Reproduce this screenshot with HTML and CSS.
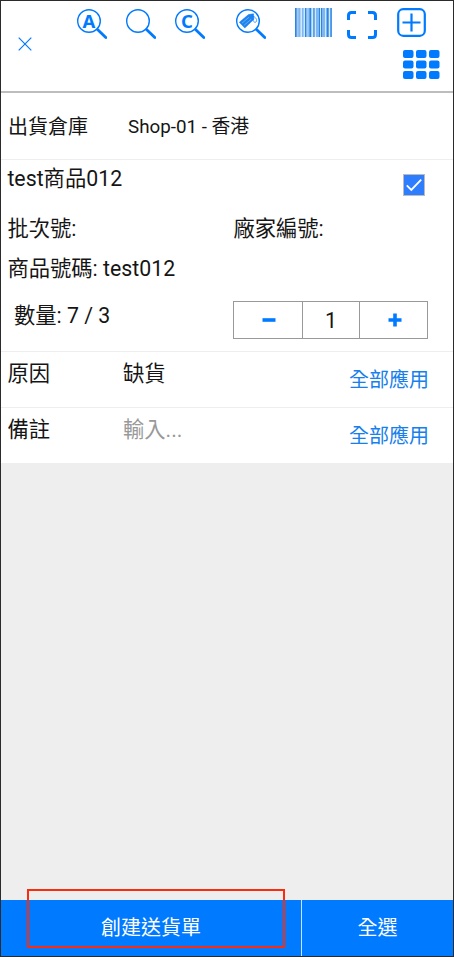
FILE: index.html
```html
<!DOCTYPE html>
<html lang="zh-Hant">
<head>
<meta charset="utf-8">
<title>出貨</title>
<link rel="stylesheet" href="styles.css">
</head>
<body>
<header class="header">
  <svg class="close" viewBox="0 0 14 14"><path d="M.7.7l12.6 12.6M13.3.7L.7 13.3"/></svg>
  <div class="tools">
    <div class="tool-row">
      <svg class="lens" viewBox="0 0 30 30"><circle cx="12" cy="12" r="11.3"/><path class="handle" d="M20.500 20.500l8.300 8"/><text x="12" y="18.700">A</text></svg>
      <svg class="lens" viewBox="0 0 30 30"><circle cx="12" cy="12" r="11.3"/><path class="handle" d="M20.500 20.500l8.300 8"/></svg>
      <svg class="lens" viewBox="0 0 30 30"><circle cx="12" cy="12" r="11.3"/><path class="handle" d="M20.500 20.500l8.300 8"/><text x="12" y="18.700">C</text></svg>
      <svg class="lens lens-tag" viewBox="0 0 30 30"><circle cx="12" cy="12" r="11.3"/><path class="handle" d="M20.500 20.500l8.300 8"/><path class="tag" d="M3.300 13.300L12.500 5.600l5-.8.400 5.500L8.800 19z"/><path class="tag-lines" d="M6 14.200l7-6M8.200 16.200l7-6"/><path class="string" d="M16.500 7.500c3.500 0 5 4 3.500 5.500-1.500 1-3-.5-3-3"/></svg>
      <svg class="barcode" viewBox="0 0 37 29"><path class="gaps" d="M0 0h37v29H0z"/><path d="M0 0h1.700v29H0zM2.700 0h.7v29h-.7zM4.500 0h.7v29h-.7zM7.500 0h.8v29h-.8zM10 0h1.500v29H10zM12.700 0h.7v29h-.7zM14.300 0h2v29h-2zM18.300 0h1.300v29h-1.300zM21.500 0h1v29h-1zM23.500 0h1.500v29h-1.500zM26 0h1.500v29H26zM28.500 0h1v29h-1zM31.500 0h2.200v29h-2.200zM35.300 0h1.500v29h-1.500z"/></svg>
      <svg class="scan" viewBox="0 0 30 28"><path d="M1.500 9V4.500q0-3 3-3H9M21 1.500h4.500q3 0 3 3V9M28.500 19v4.500q0 3-3 3H21M9 26.500H4.500q-3 0-3-3V19"/></svg>
      <svg class="add" viewBox="0 0 29 29"><rect x="1.200" y="1.200" width="26.600" height="26.600" rx="5"/><path d="M14.500 5.500v18M5.500 14.500h18"/></svg>
    </div>
    <svg class="apps" viewBox="0 0 37 29"><rect width="10.500" height="8" rx="2"/><rect x="13" width="10.500" height="8" rx="2"/><rect x="26" width="10.500" height="8" rx="2"/><rect y="10.500" width="10.500" height="8" rx="2"/><rect x="13" y="10.500" width="10.500" height="8" rx="2"/><rect x="26" y="10.500" width="10.500" height="8" rx="2"/><rect y="21" width="10.500" height="8" rx="2"/><rect x="13" y="21" width="10.500" height="8" rx="2"/><rect x="26" y="21" width="10.500" height="8" rx="2"/></svg>
  </div>
</header>
<main class="content">
  <section class="warehouse"><span class="warehouse-label">出貨倉庫</span><span class="warehouse-name">Shop-01 - 香港</span></section>
  <section class="product">
    <div class="product-title"><span>test商品012</span><span class="check"><svg viewBox="0 0 20 20"><path d="M2 10.500l5 5L18 4"/></svg></span></div>
    <div class="product-codes"><span>批次號:</span><span>廠家編號:</span></div>
    <div class="product-number">商品號碼: test012</div>
    <div class="quantity"><span class="quantity-label">數量: 7 / 3</span>
      <div class="stepper"><span class="step"><svg viewBox="0 0 14 14"><path d="M.5 7h13"/></svg></span><span class="count">1</span><span class="step"><svg viewBox="0 0 14 14"><path d="M.5 7h13M7 .5v13"/></svg></span></div>
    </div>
  </section>
  <section class="field"><span class="field-label">原因</span><span class="field-value">缺貨</span><a class="apply">全部應用</a></section>
  <section class="field"><span class="field-label">備註</span><span class="field-value placeholder">輸入...</span><a class="apply">全部應用</a></section>
</main>
<footer class="footer"><span class="create">創建送貨單</span><span class="select-all">全選</span><i class="highlight"></i></footer>
</body>
</html>
```
FILE: styles.css
```css
* { box-sizing: border-box; }
body {
  margin: 0;
  height: 957px;
  border: 1px solid #2b2b2b;
  display: flex;
  flex-direction: column;
  background: #eee;
  color: #151515;
  font: 21.3px/30px Roboto, "Noto Sans CJK TC", sans-serif;
  overflow: hidden;
}
svg { display: block; flex: none; fill: none; stroke: #007aff; }
.header {
  height: 92px;
  display: flex;
  background: #fff;
  border-bottom: 2px solid #bdbdbd;
}
.close { width: 14px; height: 14px; margin: 36px 0 0 17px; stroke-width: 1.2; }
.tools { flex: 1; margin-left: 45px; padding-top: 7px; }
.tool-row { display: flex; height: 42px; }
.lens { width: 30px; height: 30px; margin: 1px 18.9px 0 0; stroke-width: 1.4; }
.lens .handle { stroke-width: 2.8; stroke-linecap: round; }
.lens text { fill: #007aff; stroke: none; font: 700 18.5px "Noto Sans", sans-serif; text-anchor: middle; }
.lens-tag { margin-left: 12.6px; margin-right: 28.3px; }
.lens .tag { fill: #1f83ee; stroke-width: .5; }
.lens .tag-lines { stroke: #a9d2ff; stroke-width: .5; }
.lens .string { stroke-width: .7; }
.barcode { width: 37px; height: 29px; fill: #2b86e3; stroke: none; }
.barcode .gaps { fill: #d3e8fb; }
.scan { width: 30px; height: 28px; margin: 3px 0 0 15.700px; stroke-width: 3; }
.add { width: 29px; height: 29px; margin-left: 19.400px; stroke-width: 2.2; }
.apps { width: 37px; height: 29px; margin: 0 13px 0 auto; fill: #007aff; stroke: none; }
.content { flex: 1; }
.warehouse {
  height: 67px;
  display: flex;
  align-items: center;
  padding: 2px 0 0 7px;
  background: #fff;
  border-bottom: 1px solid #eee;
}
.warehouse-label { width: 120px; font-size: 20px; }
.warehouse-name { font-size: 18.8px; }
.product { height: 192px; padding: 4px 25px 0 6.4px; background: #fff; border-bottom: 1px solid #eee; }
.product-title { display: flex; justify-content: space-between; height: 50px; }
.check { width: 22px; height: 22px; margin: 10px 3px 0 0; padding: 0 1px; background: #2f7dff; border: 1px solid #bbb; }
.check svg { width: 18px; height: 20px; stroke: #fff; stroke-width: 2; }
.product-codes { display: grid; grid-template-columns: 226px 1fr; height: 40px; }
.product-number { height: 47px; }
.quantity { display: flex; justify-content: space-between; }
.quantity-label { padding-left: 6.6px; }
.stepper { display: grid; grid-template-columns: 68px 58px 1fr; width: 195px; height: 38px; border: 1px solid #999; }
.step { display: flex; align-items: center; justify-content: center; padding-left: 2px; }
.step svg { width: 14px; height: 14px; stroke-width: 3.6; }
.count { height: 36px; padding-top: 1px; text-align: center; line-height: 35px; border: solid #999; border-width: 0 1px; }
.field { height: 56px; display: flex; padding: 7px 24px 0 6.4px; background: #fff; border-bottom: 1px solid #eee; }
.field-label { width: 115.6px; }
.placeholder { color: #999; }
.apply { margin: 6px 0 0 auto; font-size: 20px; color: #1680ec; }
.footer { position: relative; height: 56px; display: flex; background: #007aff; color: #fff; font-size: 20px; line-height: 57px; text-align: center; }
.create { width: 301px; border-right: 1px solid #cbe3ff; }
.select-all { flex: 1; }
.highlight { position: absolute; left: 26px; top: -11px; width: 258px; height: 59px; border: 2px solid #fb2b0d; }
```
